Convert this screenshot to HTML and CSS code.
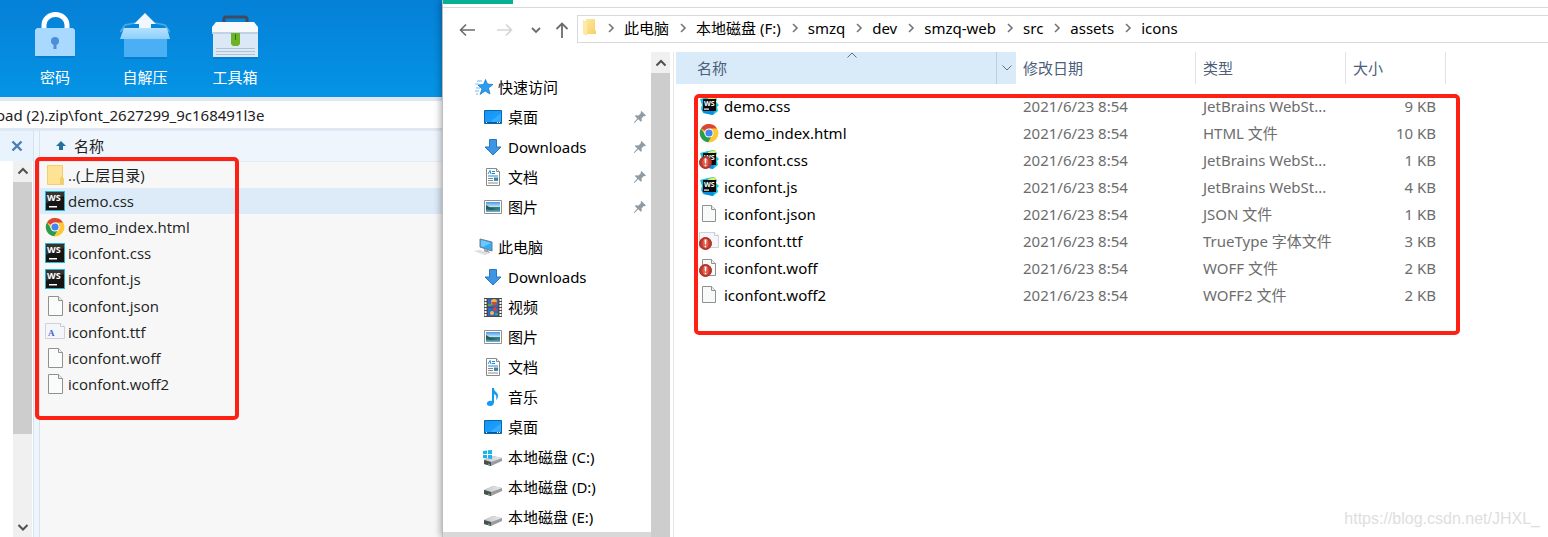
FILE: index.html
```
<!DOCTYPE html>
<html lang="zh-CN">
<head>
<meta charset="utf-8">
<title>icons</title>
<link rel="stylesheet" href="styles.css">
</head>
<body>
<svg class="sprite" aria-hidden="true">
  <defs>
    <linearGradient id="g-lid" x1="0" y1="0" x2="0" y2="1"><stop offset="0" stop-color="#b5e1ff"/><stop offset="1" stop-color="#8fcffb"/></linearGradient>
    <linearGradient id="g-folder" x1="0" y1="0" x2="1" y2="1"><stop offset="0" stop-color="#ffe9a2"/><stop offset="1" stop-color="#f6cf62"/></linearGradient>
    <linearGradient id="g-desk" x1="0" y1="0" x2="1" y2="1"><stop offset="0" stop-color="#1692f5"/><stop offset="0.6" stop-color="#1c9dfc"/><stop offset="0.61" stop-color="#3aaeff"/><stop offset="1" stop-color="#2aa5ff"/></linearGradient>
    <linearGradient id="g-pic" x1="0" y1="0" x2="0" y2="1"><stop offset="0" stop-color="#4797e8"/><stop offset="0.5" stop-color="#c9e9f7"/><stop offset="0.55" stop-color="#357f75"/><stop offset="0.75" stop-color="#3a7d90"/><stop offset="1" stop-color="#75b6dc"/></linearGradient>
    <linearGradient id="g-drive" x1="0" y1="0" x2="1" y2="0"><stop offset="0" stop-color="#c3c5c8"/><stop offset="1" stop-color="#ececef"/></linearGradient>
  </defs>
  <symbol id="i-doc" viewBox="0 0 20 20">
    <path d="M3.500 .5h10l4 4v15h-14z" fill="#fafbfb" stroke="#919191"/>
    <path d="M13.500 .5v4h4" fill="#eee" stroke="#919191"/>
  </symbol>
  <symbol id="i-docsmall" viewBox="0 0 20 20">
    <path d="M3.500 1.500h9l4 4v12h-13z" fill="#f8f9f9" stroke="#919191"/>
    <path d="M12.500 1.500v4h4" fill="#eee" stroke="#919191"/>
  </symbol>
  <symbol id="i-font" viewBox="0 0 20 20">
    <path d="M.5 1.500h15l4 3v12H.5z" fill="#f5f6fb" stroke="#d0d2d6"/>
    <path d="M15.500 1.500v3h4" fill="#fff" stroke="#c4c6ca"/>
  </symbol>
  <symbol id="i-folder" viewBox="0 0 20 20">
    <path d="M2.500 .5h15v12l1 1v6h-16z" fill="#ffe394" stroke="#f0cf70"/>
    <path d="M15 19v-6l2-2h1v8z" fill="#f3ce66"/>
  </symbol>
  <symbol id="i-ws" viewBox="0 0 20 20">
    <path d="M0 0h20v20H0z" fill="#22b8d4"/>
    <path d="M1 1h18v18H1z" fill="#151515"/>
    <path d="M1 1h18v4L1 12z" fill="#333"/>
    <path d="M4 15h8v1.500H4z" fill="#fff"/>
  </symbol>
  <symbol id="i-wsnew" viewBox="0 0 20 20">
    <path d="M1 3l8-2 6-1 3 3-1 3 3 3-2 2 1 4-5 4-10-2-2-5 1-3z" fill="#10c3d7"/>
    <path d="M9 2l8-2-1 5-7 1z" fill="#dff05a"/>
    <path d="M2 13l3 4 9 2 1-4z" fill="#0a8de0"/>
    <path d="M4 3h13v12H4z" fill="#0b0b0b"/>
    <path d="M5 12.500h5v1.200H5z" fill="#fff"/>
  </symbol>
  <symbol id="i-warn" viewBox="0 0 20 20">
    <circle cx="6.500" cy="12.500" r="6" fill="#c5372b" stroke="#a32c23"/>
    <ellipse cx="6.500" cy="12.500" rx="3" ry="4.500" fill="#da604d"/>
    <path d="M5.500 8.500h2l-.4 5h-1.200zM5.700 14.700h1.600v1.600H5.700z" fill="#fff"/>
  </symbol>
  <symbol id="i-chrome" viewBox="0 0 20 20">
    <circle cx="10" cy="10" r="9.200" fill="#fcc934"/>
    <path d="M10 10L2 5.500A9.200 9.200 0 0 1 18.200 6H10z" fill="#dc4437"/>
    <path d="M2 5.400A9.200 9.200 0 0 0 9.300 19.200l4.200-7.200L10 10 6.400 12z" fill="#2a9c52"/>
    <path d="M10 5.500h8.100A9.200 9.200 0 0 1 9.300 19.200l4.500-7.200z" fill="#fcc934"/>
    <circle cx="10" cy="10" r="4.600" fill="#fff"/>
    <circle cx="10" cy="10" r="3.600" fill="#4384f3"/>
  </symbol>
  <symbol id="i-star" viewBox="0 0 20 20">
    <path d="M11.500 2.500l2 4.500 5.500.5-4.500 3.500 1.500 6-4.800-3-5.200 3.500 2-5.500-4-4 5.500-.5z" fill="#2b9df0" stroke="#1675b9" stroke-width=".7"/>
    <path d="M3 4h5M1.500 7h3M2 11h4M1 14h4M2 17h2" stroke="#65b7ef" stroke-width="1" fill="none"/>
  </symbol>
  <symbol id="i-desktop" viewBox="0 0 20 20">
    <path d="M1.500 3.500h17v13h-17z" fill="url(#g-desk)" stroke="#0967ac"/>
    <path d="M2 15h16v1H2z" fill="#0b578f"/>
    <path d="M3 15h1v1H3zM14 15h1v1h-1zM16 15h1v1h-1z" fill="#fff"/>
  </symbol>
  <symbol id="i-down" viewBox="0 0 20 20">
    <path d="M6.500 2.500h7V10H18l-8 8-8-8h4.500z" fill="#3d95e6" stroke="#2b77bc"/>
  </symbol>
  <symbol id="i-text" viewBox="0 0 20 20">
    <path d="M3.500 1.500h10l3 3v14h-13z" fill="#fff" stroke="#898989"/>
    <path d="M13.500 1.500v3h3" fill="#eee" stroke="#898989"/>
    <path d="M5 7l2-3.500L8 7M9 4.500h3M9 6.500h3M5 9h10" stroke="#2187d2" fill="none"/>
    <path d="M5 11.500h5M5 13.500h5M5 16h10M11 13.500h4" stroke="#8a8a8a" fill="none"/>
    <path d="M11 10.500h4v3h-4z" fill="#3184b3"/>
  </symbol>
  <symbol id="i-picture" viewBox="0 0 20 20">
    <path d="M1.500 3.500h17v13h-17z" fill="#fff" stroke="#919191"/>
    <path d="M3 5h14v10H3z" fill="url(#g-pic)"/>
    <path d="M3 8l5 3 6 1-6 1-5-1z" fill="#246157"/>
  </symbol>
  <symbol id="i-pc" viewBox="0 0 20 20">
    <path d="M6 2l12 3v9L6 10z" fill="#35aaf6" stroke="#687d8d"/>
    <path d="M7 3l10 3-8 4-2-1z" fill="#6cc8ff"/>
    <path d="M10 12v3l6 1-2-3z" fill="#9ba4ab"/>
    <path d="M0 14l6-1 9 3-4 2z" fill="#cfd5d9"/>
    <path d="M2 14l10 3M5 13.500l9 2.500" stroke="#f5f5f5" stroke-width=".5"/>
  </symbol>
  <symbol id="i-video" viewBox="0 0 20 20">
    <path d="M1 1h18v19H1z" fill="#4a4a4a"/>
    <path d="M2.500 2v17M17.500 2v17" stroke="#fff" stroke-width="2" stroke-dasharray="2 1"/>
    <path d="M5 2h10v8H5zM5 11h10v8H5z" fill="#2e67cb"/>
    <circle cx="11" cy="5" r="3" fill="#e8b93a"/>
    <path d="M8 5h6v2l-3 2z" fill="#d44436"/>
    <path d="M5 7h4v2H5zM12 16h3v2h-3z" fill="#53a04a"/>
    <circle cx="12" cy="12" r="2" fill="#d44436"/>
    <circle cx="9" cy="16" r="2" fill="#edc13c"/>
  </symbol>
  <symbol id="i-music" viewBox="0 0 20 20">
    <path d="M9 1h2c0 4 4 4 4 8 0 2-1 3-2 4 1-4 0-5-2-6v8c0 3-2 4-4 4-4 0-4-4-1-5 1-.4 2-.3 3 0z" fill="#149af2"/>
  </symbol>
  <symbol id="i-drive" viewBox="0 0 20 20">
    <path d="M1 13l9-4 9 2v3l-11 5-7-2z" fill="#9a9da0"/>
    <path d="M1 13l9-4 9 2-11 4z" fill="url(#g-drive)"/>
    <path d="M1 13l7 2v4l-7-2z" fill="#4b4d4e"/>
    <path d="M5 17l2 .6" stroke="#58cf57"/>
  </symbol>
  <symbol id="i-windrive" viewBox="0 0 20 20">
    <use href="#i-drive" width="20" height="20"/>
    <path d="M0 4l4-.5V7H0zM5 3.300L9 3v4H5zM0 8h4v3.500L0 11zM5 8h4v4l-4-.4z" fill="#18b4ee"/>
  </symbol>
  <symbol id="i-pin" viewBox="0 0 14 14">
    <path d="M8.500 1L13 5.500l-1.200.8-1-.3-2.300 2.400.3 2.600-1 .8-2.600-2.600L1.500 13l-.7-.5 3.500-4L1.800 6l1-.8 2.700.2L8 3l-.4-1z" fill="#8f9ba5"/>
  </symbol>
  <symbol id="i-up" viewBox="0 0 12 12"><path d="M1.500 8.500L6 4l4.500 4.500" fill="none" stroke="#505050" stroke-width="2"/></symbol>
  <symbol id="i-dn" viewBox="0 0 12 12"><path d="M1.500 4L6 8.500 10.500 4" fill="none" stroke="#505050" stroke-width="2"/></symbol>
  <symbol id="i-sep" viewBox="0 0 8 12"><path d="M2 2l4 4-4 4" fill="none" stroke="#757575" stroke-width="1.600"/></symbol>
</svg>

<div class="screen">
  <section class="archive">
    <div class="toolbar">
      <button type="button" class="tool">
        <svg class="tool-icon" viewBox="0 0 50 50">
          <path d="M14 20v-5a11.500 10.500 0 0 1 23 0v5" fill="none" stroke="#fff" stroke-width="5"/>
          <path d="M5 44h40l-1 4H6z" fill="#0870bd" opacity=".5"/>
          <path d="M5 20l2-2h36l2 2v26H5z" fill="#a9d9ff"/>
          <circle cx="25" cy="31" r="4" fill="#4c8fd8"/>
          <path d="M23.500 32h3v7h-3z" fill="#4c8fd8"/>
        </svg>
        <span>密码</span>
      </button>
      <button type="button" class="tool">
        <svg class="tool-icon" viewBox="0 0 50 50">
          <path d="M5 18l-5 4 5-7 10-2M45 18l5 4-5-7-10-2" fill="none" stroke="#4ca9e8" stroke-width="1.500"/>
          <path d="M4 45h43v4H4z" fill="#0870bd" opacity=".5"/>
          <path d="M4 22h43v25H4z" fill="#4aaff5"/>
          <path d="M25 3l11 11h-5v8H19v-8h-5z" fill="#f1f8fd"/>
          <path d="M4 18h43l3 11H0z" fill="url(#g-lid)"/>
        </svg>
        <span>自解压</span>
      </button>
      <button type="button" class="tool">
        <svg class="tool-icon" viewBox="0 0 50 50">
          <path d="M14 13V9q0-2 2-2h18q3 0 3 2v4" fill="none" stroke="#414a5e" stroke-width="3"/>
          <path d="M3 45h45v4H3z" fill="#0870bd" opacity=".5"/>
          <path d="M3 22h45v25H3z" fill="#dbe8f5"/>
          <path d="M6 12h38l4 5v6H2v-6z" fill="#f7fafc"/>
          <path d="M2 22h46v2H2z" fill="#bfd3e5"/>
          <path d="M6 38.500h39M6 41.500h39M6 44.500h39" stroke="#b2c2d2"/>
          <path d="M21 23h9v11l-2 2h-5l-2-2z" fill="#6db324"/>
          <path d="M25.500 24v6" stroke="#2f751f"/>
        </svg>
        <span>工具箱</span>
      </button>
    </div>
    <div class="archive-path"><span>oad (2).zip\font_2627299_9c168491l3e</span></div>
    <div class="archive-body">
      <div class="tree">
        <button type="button" class="close" aria-label="关闭"><svg viewBox="0 0 12 12" width="12" height="12"><path d="M1.500 1.500l9 9M10.500 1.500l-9 9" stroke="#4c7cb2" stroke-width="2.400"/></svg></button>
        <div class="scroll">
          <svg class="arrow"><use href="#i-up"/></svg>
          <div class="thumb"></div>
          <svg class="arrow"><use href="#i-dn"/></svg>
        </div>
      </div>
      <div class="split"></div>
      <div class="zip">
        <div class="zip-head"><svg viewBox="0 0 10 10" width="10" height="10"><path d="M5 0l5 5H7v4H3V5H0z" fill="#24709f"/></svg>名称</div>
        <ul class="zip-list">
          <li><svg class="icon"><use href="#i-folder"/></svg>..(上层目录)</li>
          <li class="selected"><svg class="icon" viewBox="0 0 20 20"><use href="#i-ws"/><text x="2" y="10" class="ws-letters">WS</text></svg>demo.css</li>
          <li><svg class="icon"><use href="#i-chrome"/></svg>demo_index.html</li>
          <li><svg class="icon" viewBox="0 0 20 20"><use href="#i-ws"/><text x="2" y="10" class="ws-letters">WS</text></svg>iconfont.css</li>
          <li><svg class="icon" viewBox="0 0 20 20"><use href="#i-ws"/><text x="2" y="10" class="ws-letters">WS</text></svg>iconfont.js</li>
          <li><svg class="icon"><use href="#i-doc"/></svg>iconfont.json</li>
          <li><svg class="icon" viewBox="0 0 20 20"><use href="#i-font"/><text x="3" y="14" class="font-letter">A</text></svg>iconfont.ttf</li>
          <li><svg class="icon"><use href="#i-doc"/></svg>iconfont.woff</li>
          <li><svg class="icon"><use href="#i-doc"/></svg>iconfont.woff2</li>
        </ul>
        <div class="mark mark-zip"></div>
      </div>
    </div>
  </section>

  <section class="explorer">
    <div class="tabs"><div class="tab"></div></div>
    <div class="nav">
      <div class="nav-buttons">
        <button type="button" aria-label="后退"><svg viewBox="0 0 16 16" width="16" height="16"><path d="M16 8H1M7 2.500L1.500 8 7 13.500" fill="none" stroke="#6c6c6c" stroke-width="1.600"/></svg></button>
        <button type="button" aria-label="前进"><svg viewBox="0 0 16 16" width="16" height="16"><path d="M0 8h15M9 2.500L14.500 8 9 13.500" fill="none" stroke="#d5d5d5" stroke-width="1.600"/></svg></button>
        <button type="button" aria-label="最近"><svg viewBox="0 0 10 10" width="10" height="10"><path d="M1 3l4 4 4-4" fill="none" stroke="#6c6c6c" stroke-width="1.800"/></svg></button>
        <button type="button" aria-label="上移"><svg viewBox="0 0 16 16" width="16" height="16"><path d="M8 16V1M2.500 7L8 1.500 13.500 7" fill="none" stroke="#6c6c6c" stroke-width="1.800"/></svg></button>
      </div>
      <div class="address">
        <svg viewBox="0 0 14 18" width="14" height="18"><path d="M3 0h9v11l1 1v3H3z" fill="url(#g-folder)"/><path d="M0 1l4 2v14l-4-2z" fill="#ffe9a4"/></svg>
        <svg class="sep"><use href="#i-sep"/></svg><a href="#">此电脑</a>
        <svg class="sep"><use href="#i-sep"/></svg><a href="#">本地磁盘 (F:)</a>
        <svg class="sep"><use href="#i-sep"/></svg><a href="#">smzq</a>
        <svg class="sep"><use href="#i-sep"/></svg><a href="#">dev</a>
        <svg class="sep"><use href="#i-sep"/></svg><a href="#">smzq-web</a>
        <svg class="sep"><use href="#i-sep"/></svg><a href="#">src</a>
        <svg class="sep"><use href="#i-sep"/></svg><a href="#">assets</a>
        <svg class="sep"><use href="#i-sep"/></svg><a href="#">icons</a>
      </div>
    </div>
    <div class="panes">
      <nav class="side">
        <ul class="places">
          <li class="root"><svg class="icon"><use href="#i-star"/></svg>快速访问</li>
          <li><svg class="icon"><use href="#i-desktop"/></svg>桌面<svg class="pin"><use href="#i-pin"/></svg></li>
          <li><svg class="icon"><use href="#i-down"/></svg>Downloads<svg class="pin"><use href="#i-pin"/></svg></li>
          <li><svg class="icon"><use href="#i-text"/></svg>文档<svg class="pin"><use href="#i-pin"/></svg></li>
          <li><svg class="icon"><use href="#i-picture"/></svg>图片<svg class="pin"><use href="#i-pin"/></svg></li>
        </ul>
        <ul class="places">
          <li class="root"><svg class="icon"><use href="#i-pc"/></svg>此电脑</li>
          <li><svg class="icon"><use href="#i-down"/></svg>Downloads</li>
          <li><svg class="icon"><use href="#i-video"/></svg>视频</li>
          <li><svg class="icon"><use href="#i-picture"/></svg>图片</li>
          <li><svg class="icon"><use href="#i-text"/></svg>文档</li>
          <li><svg class="icon"><use href="#i-music"/></svg>音乐</li>
          <li><svg class="icon"><use href="#i-desktop"/></svg>桌面</li>
          <li><svg class="icon"><use href="#i-windrive"/></svg>本地磁盘 (C:)</li>
          <li><svg class="icon"><use href="#i-drive"/></svg>本地磁盘 (D:)</li>
          <li><svg class="icon"><use href="#i-drive"/></svg>本地磁盘 (E:)</li>
        </ul>
        <div class="side-end"></div>
      </nav>
      <div class="scroll side-scroll">
        <svg class="arrow"><use href="#i-up"/></svg>
        <div class="thumb"></div>
      </div>
      <main class="content">
        <div class="files">
          <table>
            <colgroup><col class="c-name"><col class="c-date"><col class="c-type"><col class="c-size"></colgroup>
            <thead>
              <tr>
                <th class="sorted"><div class="th-name"><span>名称</span><svg class="sort" viewBox="0 0 12 6"><path d="M1.500 5.500L6 1l4.500 4.500" fill="none" stroke="#5f7180"/></svg><button type="button" aria-label="筛选"><svg viewBox="0 0 10 6" width="10" height="6"><path d="M.5.500L5 5 9.500.500" fill="none" stroke="#5f7180"/></svg></button></div></th>
                <th>修改日期</th><th>类型</th><th>大小</th>
              </tr>
            </thead>
            <tbody>
              <tr><td><svg class="icon" viewBox="0 0 20 20"><use href="#i-wsnew"/><text x="5" y="10" class="ws-small">WS</text></svg>demo.css</td><td>2021/6/23 8:54</td><td>JetBrains WebSt...</td><td>9 KB</td></tr>
              <tr><td><svg class="icon"><use href="#i-chrome"/></svg>demo_index.html</td><td>2021/6/23 8:54</td><td>HTML 文件</td><td>10 KB</td></tr>
              <tr><td><svg class="icon" viewBox="0 0 20 20"><use href="#i-wsnew"/><text x="5" y="10" class="ws-small">WS</text><use href="#i-warn"/></svg>iconfont.css</td><td>2021/6/23 8:54</td><td>JetBrains WebSt...</td><td>1 KB</td></tr>
              <tr><td><svg class="icon" viewBox="0 0 20 20"><use href="#i-wsnew"/><text x="5" y="10" class="ws-small">WS</text></svg>iconfont.js</td><td>2021/6/23 8:54</td><td>JetBrains WebSt...</td><td>4 KB</td></tr>
              <tr><td><svg class="icon"><use href="#i-docsmall"/></svg>iconfont.json</td><td>2021/6/23 8:54</td><td>JSON 文件</td><td>1 KB</td></tr>
              <tr><td><svg class="icon"><use href="#i-font"/><use href="#i-warn"/></svg>iconfont.ttf</td><td>2021/6/23 8:54</td><td>TrueType 字体文件</td><td>3 KB</td></tr>
              <tr><td><svg class="icon"><use href="#i-docsmall"/><use href="#i-warn"/></svg>iconfont.woff</td><td>2021/6/23 8:54</td><td>WOFF 文件</td><td>2 KB</td></tr>
              <tr><td><svg class="icon"><use href="#i-docsmall"/></svg>iconfont.woff2</td><td>2021/6/23 8:54</td><td>WOFF2 文件</td><td>2 KB</td></tr>
            </tbody>
          </table>
          <div class="mark mark-files"></div>
        </div>
        <div class="watermark">https://blog.csdn.net/JHXL_</div>
      </main>
    </div>
  </section>
</div>
</body>
</html>
```
FILE: styles.css
```
* { box-sizing: border-box; }
body {
  margin: 0;
  font: 15px/20px "Noto Sans", "Noto Sans CJK SC", sans-serif;
  color: #000;
  background: #fff;
}
button { border: 0; padding: 0; background: none; font: inherit; color: inherit; }
ul { list-style: none; margin: 0; padding: 0; }
svg { display: block; flex: none; }
.sprite { position: absolute; width: 0; height: 0; }
.icon { width: 20px; height: 20px; }
.font-letter { font: bold 9px "Liberation Serif", serif; fill: #3f62c2; }
.ws-letters { font: bold 9px "Open Sans", sans-serif; fill: #fff; }
.ws-small { font: bold 7px "Open Sans", sans-serif; fill: #fff; }

.screen { display: flex; height: 100vh; overflow: hidden; }

/* archive window */
.archive { flex: none; width: 442px; display: flex; flex-direction: column; background: #f7f7f7; }
.toolbar {
  display: flex;
  padding: 10px 10px 9px;
  background: linear-gradient(#0580d7, #0594e5);
}
.tool { width: 90px; display: flex; flex-direction: column; align-items: center; gap: 7px; color: #fff; line-height: 21px; }
.tool-icon { width: 50px; height: 50px; }
.archive-path {
  display: flex;
  align-items: center;
  height: 34px;
  overflow: hidden;
  white-space: nowrap;
  background: #fff;
  border: solid #dfe7f3;
  border-width: 4px 0 3px;
  color: #222;
}
.archive-path span { margin-left: -4px; }
.archive-body { flex: 1; display: flex; min-height: 0; }
.tree { width: 33px; display: flex; flex-direction: column; background: #fff; }
.close { height: 30px; display: flex; align-items: center; justify-content: center; background: #e9f3fd; }
.scroll { flex: 1; display: flex; flex-direction: column; align-items: center; width: 19px; background: #f0f0f0; }
.tree .scroll { margin-left: 13px; }
.arrow { width: 12px; height: 12px; margin: 4px 0 5px; }
.thumb { width: 100%; height: 252px; background: #cdcdcd; }
.thumb + .arrow { margin-top: auto; margin-bottom: 4px; }
.split { width: 7px; background: #edf5fd; border: solid #d5e3f0; border-width: 0 1px; }
.zip { flex: 1; position: relative; }
.zip-head { display: flex; align-items: center; gap: 8px; height: 31px; padding-left: 16px; background: #eef5fd; border-bottom: 1px solid #e3ebf4; color: #222; }
.zip-list { display: grid; grid-auto-rows: 1fr; height: 236px; font-family: "Open Sans", "Noto Sans CJK SC", sans-serif; }
.zip-list li { display: flex; align-items: center; gap: 3px; padding: 0 0 1px 5px; color: #222; }
.zip-list .selected { background: #dcebf7; }

/* hand-drawn frames */
.mark { position: absolute; border: 4px solid #ff2014; border-radius: 5px; pointer-events: none; }
.mark-zip { left: -5px; top: 26px; width: 204px; height: 263px; }
.mark-files { left: 18px; right: -14px; top: 42px; bottom: -27px; }

/* explorer window */
.explorer { flex: 1; min-width: 0; position: relative; display: flex; flex-direction: column; background: #fff; border-left: 1px solid #bdbdbd; box-shadow: -1px 0 7px rgba(0, 0, 0, .35); }
.tabs { height: 8px; border-bottom: 1px solid #d9d9d9; }
.tab { width: 70px; height: 4px; background: #07b294; }
.nav { display: flex; padding: 7px 0 9px; }
.nav-buttons { flex: none; width: 134px; display: flex; align-items: center; padding: 2px 0 0 16px; gap: 22px; }
.nav-buttons button:nth-child(3) { margin: 0 -9px 0 -4px; }
.address { flex: 1; display: flex; align-items: center; height: 28px; padding: 0 0 2px 5px; border: solid #d9d9d9; border-width: 1px 0 1px 1px; white-space: nowrap; }
.address a { color: #000; text-decoration: none; }
.sep { width: 8px; height: 12px; margin: 0 9px 0 10px; }
.panes { flex: 1; display: flex; min-height: 0; }
.side { flex: none; width: 208px; display: flex; flex-direction: column; gap: 10px; padding-top: 20px; overflow: hidden; }
.places li { display: flex; align-items: center; gap: 5px; height: 30px; padding: 0 4px 0 40px; white-space: nowrap; }
.places .root { padding-left: 31px; gap: 4px; }
.pin { width: 14px; height: 14px; margin-left: auto; }
.side-end { flex: none; height: 6px; margin-top: -10px; background: #d9d9d9; }
.side-scroll { flex: none; }
.side-scroll .arrow { margin: 5px 0 4px; }
.side-scroll .thumb { flex: 1; }
.content { flex: 1; min-width: 0; display: flex; flex-direction: column; align-items: flex-start; justify-content: space-between; margin-left: 3px; padding-left: 2px; border-left: 1px solid #e8e8e8; }
.files { position: relative; }
table { table-layout: fixed; width: 770px; border-collapse: separate; border-spacing: 0; }
.c-name { width: 340px; }
.c-date { width: 180px; }
.c-type { width: 150px; }
.c-size { width: 100px; }
th { height: 32px; padding: 0 7px; text-align: left; font-weight: 400; color: #4c607a; border-right: 1px solid #e2e2e2; }
th.sorted { padding: 0; border: 0; background: #d9eaf8; }
.th-name { position: relative; display: flex; justify-content: space-between; align-items: center; height: 32px; padding-left: 21px; }
.th-name button { width: 20px; height: 32px; display: flex; align-items: center; justify-content: center; border-left: 1px solid #bccfdd; }
.sort { position: absolute; left: 170px; top: 0; width: 12px; height: 6px; }
tbody::before { content: ""; display: block; height: 8px; }
td { height: 27px; padding: 0 7px; color: #6d6d6d; white-space: nowrap; }
td:first-child { display: flex; align-items: center; gap: 5px; padding-left: 23px; color: #000; }
td:last-child { padding-right: 10px; text-align: right; }
.watermark { align-self: flex-end; margin: 0 8px 8px; font: 16px/20px "Liberation Sans", sans-serif; color: #dedede; }
```
